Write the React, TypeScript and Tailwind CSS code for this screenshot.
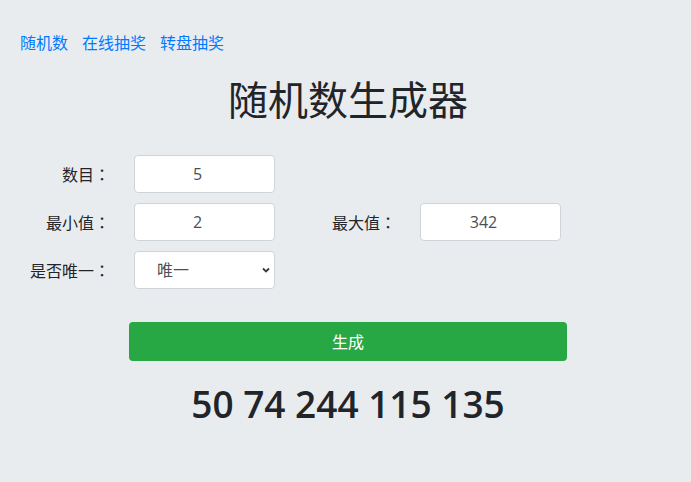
import { useState } from "react";

const navLinks = ["随机数", "在线抽奖", "转盘抽奖"];

function Label({ text }: { text: string }) {
  return (
    <label className="w-[96px] text-right text-[16px] text-[#212529]">
      {text}
      <span className="font-['Noto_Sans_CJK_JP',sans-serif]">：</span>
    </label>
  );
}

function Field({ label, value }: { label: string; value: string }) {
  return (
    <div className="flex items-center gap-[24px]">
      <Label text={label} />
      <input
        defaultValue={value}
        className="h-[38px] w-[141px] rounded-[4px] border border-[#ced4da] bg-white pl-[12px] pr-[26px] text-center text-[16px] text-[#495057] outline-none"
      />
    </div>
  );
}

export default function App() {
  const [unique, setUnique] = useState("唯一");

  return (
    <div className="min-h-screen bg-[#e9ecef] font-['Open_Sans','Noto_Sans_CJK_SC',sans-serif] text-[#212529]">
      <nav className="flex gap-[14px] pl-[20px] pt-[31px] text-[16px] leading-6">
        {navLinks.map((link) => (
          <a key={link} href="#" className="text-[#007bff] hover:underline">
            {link}
          </a>
        ))}
      </nav>

      <h1 className="ml-[129px] mt-[21px] w-[438px] text-center text-[40px] font-normal leading-[48px]">
        随机数生成器
      </h1>

      <div className="ml-[14px] mt-[31px] flex flex-col gap-[10px]">
        <Field label="数目" value="5" />
        <div className="flex gap-[25px]">
          <Field label="最小值" value="2" />
          <Field label="最大值" value="342" />
        </div>
        <div className="flex items-center gap-[24px]">
          <Label text="是否唯一" />
          <div className="relative w-[141px]">
            <select
              value={unique}
              onChange={(e) => setUnique(e.target.value)}
              className="h-[38px] w-full appearance-none rounded-[4px] border border-[#ced4da] bg-white pl-[22px] text-[16px] text-[#495057] outline-none"
            >
              <option>唯一</option>
              <option>不唯一</option>
            </select>
            <svg
              className="pointer-events-none absolute right-[5px] top-[15px]"
              width="8"
              height="8"
              viewBox="0 0 8 8"
            >
              <path d="M1 2.5 L4 5.5 L7 2.5" fill="none" stroke="#343a40" strokeWidth="1.8" />
            </svg>
          </div>
        </div>
      </div>

      <div className="ml-[129px] mt-[33px] w-[438px]">
        <button className="h-[39px] w-full rounded-[4px] bg-[#28a745] text-[16px] text-white hover:bg-[#218838]">
          生成
        </button>
        <div className="mt-[21px] text-center text-[37px] font-semibold leading-[44px]">
          50 74 244 115 135
        </div>
      </div>
    </div>
  );
}
